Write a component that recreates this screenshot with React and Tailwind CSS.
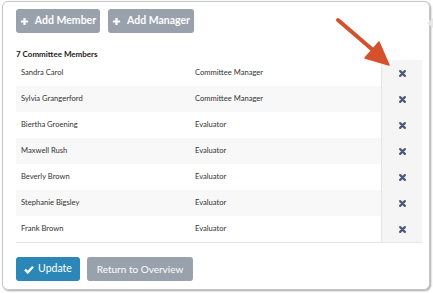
import React from 'react';

const members = [
  { name: 'Sandra Carol', role: 'Committee Manager' },
  { name: 'Sylvia Grangerford', role: 'Committee Manager' },
  { name: 'Biertha Groening', role: 'Evaluator' },
  { name: 'Maxwell Rush', role: 'Evaluator' },
  { name: 'Beverly Brown', role: 'Evaluator' },
  { name: 'Stephanie Bigsley', role: 'Evaluator' },
  { name: 'Frank Brown', role: 'Evaluator' },
];

function PlusIcon() {
  return (
    <svg width="9" height="9" viewBox="0 0 10 10" className="shrink-0">
      <path d="M5 1v8M1 5h8" stroke="currentColor" strokeWidth="2.4" />
    </svg>
  );
}

function CheckIcon() {
  return (
    <svg width="10" height="9" viewBox="0 0 10 9" className="shrink-0">
      <path d="M1 4.6l2.8 2.8L9 1.8" fill="none" stroke="currentColor" strokeWidth="2.3" />
    </svg>
  );
}

function TimesIcon() {
  return (
    <svg width="7" height="7" viewBox="0 0 8 8">
      <path d="M1.3 1.3l5.4 5.4M6.7 1.3l-5.4 5.4" stroke="currentColor" strokeWidth="2.5" strokeLinecap="round" />
    </svg>
  );
}

function App() {
  return (
    <div className="relative w-[433px] h-[293px] bg-white overflow-hidden" style={{ fontFamily: 'Lato, "Open Sans", sans-serif' }}>
      <div className="ml-[2px] mt-[1px] w-[428px] h-[289px] rounded-md border border-[#c6c6c6] bg-white shadow-[1px_1px_2px_rgba(0,0,0,0.35)] pl-[13px] pr-[7px] pt-[7px]">
        <div className="flex gap-2">
          <button className="flex items-center justify-center gap-[6px] w-[84px] h-[24px] rounded-[3px] bg-[#99a1ad] text-white text-[10.5px] font-bold">
            <PlusIcon /> Add Member
          </button>
          <button className="flex items-center justify-center gap-[6px] w-[86px] h-[24px] rounded-[3px] bg-[#99a1ad] text-white text-[10.5px] font-bold">
            <PlusIcon /> Add Manager
          </button>
        </div>

        <div className="mt-[15px] h-[12px] text-[8px] font-bold text-[#222] leading-[12px]">7 Committee Members</div>

        <div className="w-[406px] border-b border-[#e6e6e6]">
          {members.map((m, i) => (
            <div key={m.name} className={`flex h-[26px] items-center text-[7.6px] text-[#333] ${i % 2 === 1 ? 'bg-[#f8f8f8]' : 'bg-white'}`}>
              <div className="w-[174px] pl-[5px]">{m.name}</div>
              <div className="w-[191px] pl-[5px]">{m.role}</div>
              <div className="flex h-full flex-1 items-center justify-center border-l border-[#e3e3e3] bg-[#f5f5f5] text-[#4b5a78]">
                <TimesIcon />
              </div>
            </div>
          ))}
        </div>

        <div className="mt-[14px] flex gap-[7px]">
          <button className="flex items-center justify-center gap-[4px] w-[64px] h-[24px] rounded-[3px] bg-[#2b87b8] text-white text-[10.5px]">
            <CheckIcon /> Update
          </button>
          <button className="flex items-center justify-center w-[106px] h-[24px] rounded-[3px] bg-[#99a1ad] text-white text-[10px]">
            Return to Overview
          </button>
        </div>
      </div>

      <div className="absolute left-[427px] top-[18px] w-0 h-0 border-y-[5px] border-y-transparent border-r-[6px] border-r-[#e6e6e6]" />

      <svg className="absolute left-0 top-0 pointer-events-none" width="433" height="293">
        <path d="M338 20L374 51" stroke="#d4512b" strokeWidth="4" strokeLinecap="round" />
        <path d="M389 65L365 58L379 42Z" fill="#d4512b" stroke="#d4512b" strokeWidth="1.5" strokeLinejoin="round" />
      </svg>
    </div>
  );
}

export default App;
